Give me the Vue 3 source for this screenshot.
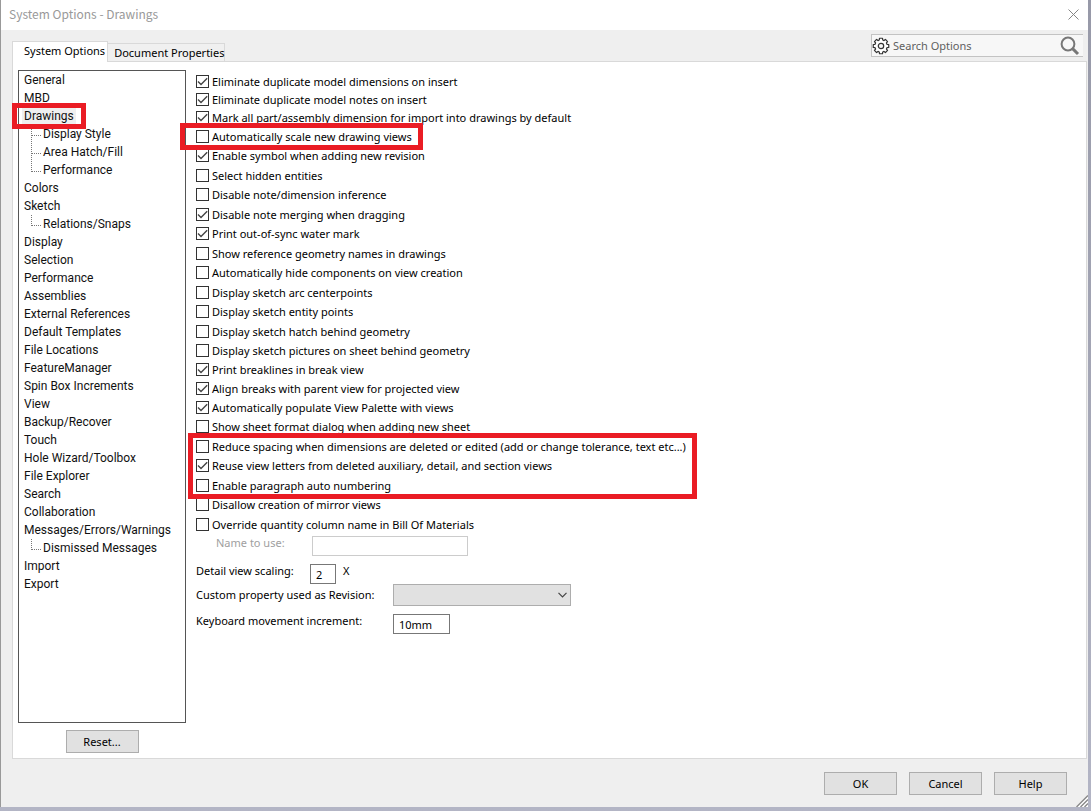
<template>
  <div class="desktop">
    <div class="window">
      <header class="title-bar">
        <h1>System Options - Drawings</h1>
        <button type="button" class="close-button" aria-label="Close">
          <svg width="11" height="11" viewBox="0 0 11 11">
            <path d="M0.5 0.5L10.5 10.5M10.5 0.5L0.5 10.5" fill="none" stroke="#858585" />
          </svg>
        </button>
      </header>

      <div class="toolbar">
        <nav class="tabs">
          <button
            v-for="tab in tabs"
            :key="tab"
            type="button"
            class="tab"
            :class="{ active: tab === activeTab }"
            @click="activeTab = tab"
          >{{ tab }}</button>
        </nav>
        <div class="search-box">
          <svg class="gear" width="18" height="18" viewBox="0 0 18 18">
            <path :d="gearPath" fill="#fff" stroke="#333" stroke-width="1.2" stroke-linejoin="round" />
            <circle cx="9" cy="9" r="2.7" fill="#f7f7f7" stroke="#333" stroke-width="1.2" />
          </svg>
          <input v-model="search" type="text" placeholder="Search Options" aria-label="Search Options" />
          <button type="button" class="search-button" aria-label="Search">
            <svg width="20" height="20" viewBox="0 0 20 20">
              <circle cx="8" cy="8" r="6.4" fill="none" stroke="#777" stroke-width="2" />
              <path d="M12.6 12.6L18 18" stroke="#777" stroke-width="3" />
            </svg>
          </button>
        </div>
      </div>

      <main class="panel">
        <aside class="sidebar">
          <ul class="tree">
            <li v-for="node in tree" :key="node.name">
              <a href="#" :class="{ selected: node.name === selected }" @click.prevent="selected = node.name">{{ node.name }}</a>
              <ul v-if="node.children" class="branch">
                <li v-for="child in node.children" :key="child">
                  <a href="#" @click.prevent="selected = child">{{ child }}</a>
                </li>
              </ul>
            </li>
          </ul>
          <button type="button" class="push-button">Reset...</button>
        </aside>

        <form class="settings" @submit.prevent>
          <div v-for="(group, index) in groups" :key="index" class="group" :class="group.mark">
            <label v-for="option in group.options" :key="option.label" class="option" :class="option.size">
              <input v-model="option.checked" type="checkbox" />
              <svg v-if="option.checked" class="tick" width="13" height="13" viewBox="0 0 13 13">
                <path d="M2 6.5L5 9.5L11.2 3.2" fill="none" stroke="#444" stroke-width="1.4" />
              </svg>
              <span>{{ option.label }}</span>
            </label>
          </div>

          <div class="field name-field">
            <label for="column-name">Name to use:</label>
            <input id="column-name" v-model="columnName" type="text" disabled />
          </div>
          <div class="field scale-field">
            <label for="scaling">Detail view scaling:</label>
            <input id="scaling" v-model="scaling" type="text" />
            <span>X</span>
          </div>
          <div class="field revision-field">
            <label for="revision">Custom property used as Revision:</label>
            <div class="select-wrap">
              <select id="revision" v-model="revision">
                <option value=""></option>
              </select>
              <svg class="chevron" width="9" height="6" viewBox="0 0 9 6">
                <path d="M0.5 0.8L4.5 4.8L8.5 0.8" fill="none" stroke="#444" stroke-width="1.2" />
              </svg>
            </div>
          </div>
          <div class="field keyboard-field">
            <label for="increment">Keyboard movement increment:</label>
            <input id="increment" v-model="increment" type="text" />
          </div>
        </form>
      </main>

      <footer class="actions">
        <button type="button" class="push-button">OK</button>
        <button type="button" class="push-button">Cancel</button>
        <button type="button" class="push-button">Help</button>
        <svg class="grip" width="12" height="12" viewBox="0 0 12 12">
          <path d="M0 12L12 0V12Z" fill="#fff" />
          <path d="M0.5 12L12 0.5M4.5 12L12 4.5M8.5 12L12 8.5" stroke="#888" stroke-width="1.4" />
        </svg>
      </footer>
    </div>
  </div>
</template>

<script setup>
import { ref } from 'vue';

const tabs = ['System Options', 'Document Properties'];
const activeTab = ref('System Options');
const search = ref('');
const selected = ref('Drawings');
const columnName = ref('');
const scaling = ref('2');
const revision = ref('');
const increment = ref('10mm');

const tree = [
  { name: 'General' },
  { name: 'MBD' },
  { name: 'Drawings', children: ['Display Style', 'Area Hatch/Fill', 'Performance'] },
  { name: 'Colors' },
  { name: 'Sketch', children: ['Relations/Snaps'] },
  { name: 'Display' },
  { name: 'Selection' },
  { name: 'Performance' },
  { name: 'Assemblies' },
  { name: 'External References' },
  { name: 'Default Templates' },
  { name: 'File Locations' },
  { name: 'FeatureManager' },
  { name: 'Spin Box Increments' },
  { name: 'View' },
  { name: 'Backup/Recover' },
  { name: 'Touch' },
  { name: 'Hole Wizard/Toolbox' },
  { name: 'File Explorer' },
  { name: 'Search' },
  { name: 'Collaboration' },
  { name: 'Messages/Errors/Warnings', children: ['Dismissed Messages'] },
  { name: 'Import' },
  { name: 'Export' }
];

const option = (label, checked = false, size = '') => ({ label, checked, size });

const groups = ref([
  {
    options: [
      option('Eliminate duplicate model dimensions on insert', true, 'tight'),
      option('Eliminate duplicate model notes on insert', true, 'tight'),
      option('Mark all part/assembly dimension for import into drawings by default', true, 'tight')
    ]
  },
  {
    mark: 'marked wide',
    options: [option('Automatically scale new drawing views', false, 'tall')]
  },
  {
    options: [
      option('Enable symbol when adding new revision', true),
      option('Select hidden entities', false, 'tall'),
      option('Disable note/dimension inference'),
      option('Disable note merging when dragging', true, 'tall'),
      option('Print out-of-sync water mark', true),
      option('Show reference geometry names in drawings', false, 'tall'),
      option('Automatically hide components on view creation'),
      option('Display sketch arc centerpoints', false, 'tall'),
      option('Display sketch entity points'),
      option('Display sketch hatch behind geometry', false, 'tall'),
      option('Display sketch pictures on sheet behind geometry'),
      option('Print breaklines in break view', true),
      option('Align breaks with parent view for projected view', true, 'tight'),
      option('Automatically populate View Palette with views', true, 'tall'),
      option('Show sheet format dialog when adding new sheet')
    ]
  },
  {
    mark: 'marked',
    options: [
      option('Reduce spacing when dimensions are deleted or edited (add or change tolerance, text etc...)', false, 'tall'),
      option('Reuse view letters from deleted auxiliary, detail, and section views', true),
      option('Enable paragraph auto numbering', false, 'tall')
    ]
  },
  {
    options: [
      option('Disallow creation of mirror views'),
      option('Override quantity column name in Bill Of Materials', false, 'tall')
    ]
  }
]);

// Eight rounded teeth around the hub
const buildGear = () => {
  const point = (radius, degrees) => {
    const angle = (degrees * Math.PI) / 180;
    return `${(9 + radius * Math.cos(angle)).toFixed(2)} ${(9 + radius * Math.sin(angle)).toFixed(2)}`;
  };
  let path = '';
  for (let i = 0; i < 8; i++) {
    const a = i * 45;
    path += `${i ? 'L' : 'M'}${point(6.2, a - 16)}L${point(7.9, a - 11)}L${point(7.9, a + 11)}L${point(6.2, a + 16)}`;
  }
  return path + 'Z';
};

const gearPath = buildGear();
</script>

<style>
body {
  margin: 0;
}
</style>

<style scoped>
* {
  box-sizing: border-box;
}

.desktop {
  display: flex;
  min-height: 100vh;
  padding: 0 3px 4px 0;
  background: linear-gradient(#9799a8, #b3b5c5);
  border-bottom: 1px solid #fff;
  font-family: "Noto Sans", "Open Sans", sans-serif;
  font-size: 11px;
  color: #000;
}

button,
input,
select {
  font: inherit;
  color: inherit;
}

.window {
  flex: 1;
  display: flex;
  flex-direction: column;
  background: #efefef;
  border-left: 1px solid #999;
}

.title-bar {
  display: flex;
  justify-content: space-between;
  align-items: center;
  height: 30px;
  padding: 0 9px 2px 8px;
  background: #fff;
}

.title-bar h1 {
  margin: 0;
  font-family: "Noto Sans CJK KR", sans-serif;
  font-size: 12px;
  font-weight: normal;
  line-height: 18px;
  color: #999;
}

.close-button {
  display: flex;
  padding: 0;
  border: none;
  background: none;
}

.toolbar {
  display: flex;
  justify-content: space-between;
  height: 31px;
  padding-left: 11px;
}

.tabs {
  display: flex;
  align-items: flex-end;
}

.tab {
  height: 18px;
  padding: 0 0 0 6px;
  border: 1px solid #d9d9d9;
  border-width: 1px 1px 0 0;
  background: #f0f0f0;
  line-height: 17px;
  white-space: nowrap;
}

.tab.active {
  position: relative;
  height: 21px;
  padding: 0 2px 3px 11px;
  border-left-width: 1px;
  margin-bottom: -1px;
  background: #fff;
}

.search-box {
  display: flex;
  align-items: center;
  width: 212px;
  height: 23px;
  margin: 4px 5px 0 0;
  border: 1px solid #c3c3c3;
  border-right: none;
  background: #f7f7f7;
}

.search-box input {
  flex: 1;
  min-width: 0;
  padding: 0 0 0 3px;
  border: none;
  outline: none;
  background: none;
}

.search-box input::placeholder {
  color: #5f5f5f;
  opacity: 1;
}

.search-button {
  display: flex;
  padding: 0 3px 0 0;
  border: none;
  background: none;
}

.panel {
  flex: 1;
  display: flex;
  margin: 0 1px 0 11px;
  padding: 8px 5px 5px;
  border: 1px solid #d9d9d9;
  background: #fff;
}

.sidebar {
  display: flex;
  flex-direction: column;
  align-items: center;
  width: 168px;
}

.tree {
  flex: 1;
  width: 100%;
  margin: 0 0 7px;
  padding: 0;
  border: 1px solid #555;
  list-style: none;
  font-family: Roboto, sans-serif;
  font-size: 12px;
  line-height: 18px;
}

.tree a {
  position: relative;
  display: block;
  width: fit-content;
  height: 18px;
  margin-left: 3px;
  padding: 0 2px;
  color: #111;
  text-decoration: none;
  white-space: nowrap;
}

.tree a.selected {
  background: #efefef;
}

.tree a.selected::after {
  content: "";
  position: absolute;
  inset: -4px -10px;
  border: 5px solid #ea1c24;
  z-index: 1;
}

.branch {
  margin: 0;
  padding-left: 12px;
  list-style: none;
}

.branch li {
  position: relative;
  padding-left: 7px;
}

.branch li::before {
  content: "";
  position: absolute;
  left: 0;
  top: 0;
  width: 9px;
  height: 10px;
  border-left: 1px dotted #777;
  border-bottom: 1px dotted #777;
}

.branch li:not(:first-child)::before {
  top: -8px;
  height: 18px;
}

.push-button {
  width: 73px;
  height: 23px;
  padding: 0;
  border: 1px solid #adadad;
  background: #e1e1e1;
}

.settings {
  flex: 1;
  padding: 2px 0 0 10px;
}

.group {
  width: fit-content;
}

.marked {
  position: relative;
  z-index: 1;
}

.marked::after {
  content: "";
  position: absolute;
  inset: -3px -11px -4px -8px;
  border: 5px solid #ea1c24;
  pointer-events: none;
}

.marked.wide::after {
  left: -16px;
}

.option {
  position: relative;
  display: flex;
  align-items: center;
  gap: 3px;
  height: 19px;
  white-space: nowrap;
}

.option.tight {
  height: 18px;
}

.option.tall {
  height: 20px;
}

.option input {
  appearance: none;
  width: 13px;
  height: 13px;
  margin: 0;
  border: 1px solid #333;
  background: #fff;
}

.tick {
  position: absolute;
  left: 0;
  pointer-events: none;
}

.field {
  display: flex;
  align-items: flex-start;
  line-height: 14px;
}

.field label {
  white-space: nowrap;
}

.field input {
  height: 20px;
  padding: 0 5px;
  border: 1px solid #777;
  background: #fff;
}

.name-field {
  margin-top: 2px;
  padding-left: 20px;
  color: #a0a0a0;
}

.name-field label {
  width: 96px;
}

.name-field input {
  width: 156px;
  border-color: #ccc;
}

.scale-field {
  margin-top: 8px;
}

.scale-field label {
  width: 114px;
}

.scale-field input {
  width: 26px;
  margin-right: 7px;
}

.revision-field {
  align-items: center;
}

.revision-field label,
.keyboard-field label {
  width: 197px;
}

.keyboard-field {
  margin-top: 8px;
}

.keyboard-field input {
  width: 57px;
}

.select-wrap {
  position: relative;
  display: flex;
  width: 178px;
}

.select-wrap select {
  appearance: none;
  width: 100%;
  height: 22px;
  border: 1px solid #adadad;
  border-radius: 0;
  background: #e1e1e1;
}

.chevron {
  position: absolute;
  right: 4px;
  top: 8px;
  pointer-events: none;
}

.actions {
  position: relative;
  display: flex;
  justify-content: flex-end;
  gap: 12px;
  padding: 13px 21px 12px;
}

.grip {
  position: absolute;
  right: 0;
  bottom: 0;
}
</style>
